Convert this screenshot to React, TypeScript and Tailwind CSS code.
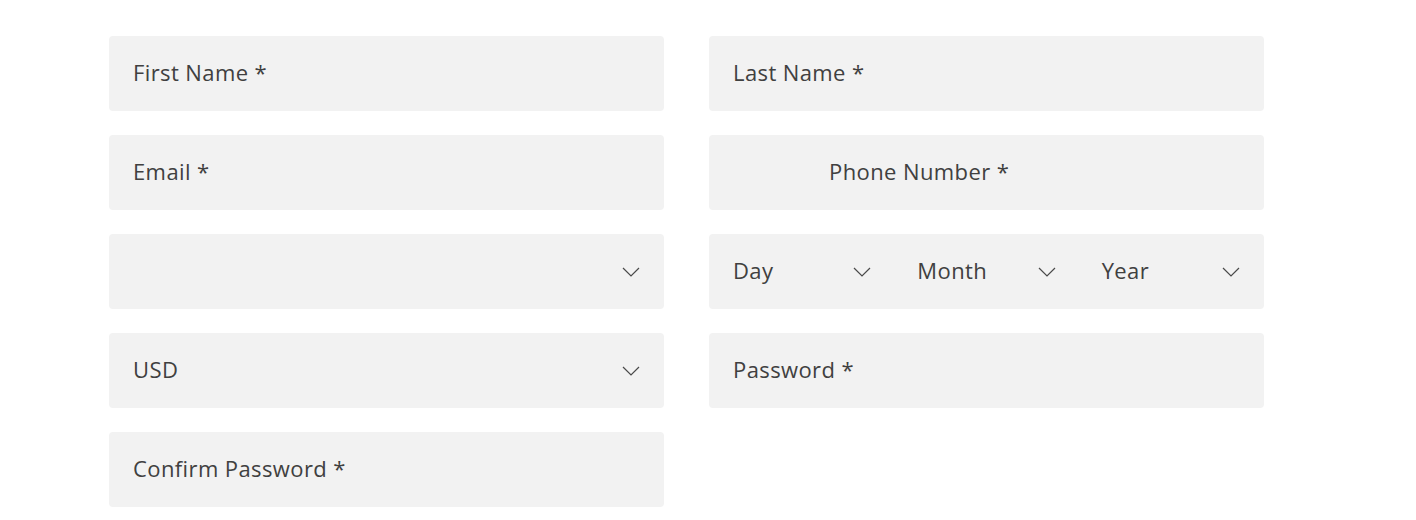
const Chevron = () => (
  <svg width="18" height="10" viewBox="0 0 18 10" fill="none" className="shrink-0 text-[#4a4a4a]">
    <path d="M1 1l8 8 8-8" stroke="currentColor" strokeWidth="1.2" />
  </svg>
);

const Field = ({ label, className = "" }: { label: string; className?: string }) => (
  <div className={`h-[75px] rounded bg-[#f2f2f2] flex items-center px-6 ${className}`}>
    <span className="-mt-0.5">{label}</span>
  </div>
);

const Select = ({ label }: { label: string }) => (
  <div className="h-[75px] rounded bg-[#f2f2f2] flex items-center justify-between px-6">
    <span className="-mt-0.5">{label}</span>
    <Chevron />
  </div>
);

export default function App() {
  return (
    <div className="w-[1416px] h-[520px] bg-white font-['Open_Sans',sans-serif] text-[22px] tracking-[0.4px] text-[#404040]">
      <div className="pl-[109px] pt-[36px] grid grid-cols-[555px_555px] gap-x-[45px] gap-y-[24px]">
        <Field label="First Name *" />
        <Field label="Last Name *" />
        <Field label="Email *" />
        <Field label="Phone Number *" className="pl-[120px]" />
        <Select label="" />
        {/* Date of birth */}
        <div className="h-[75px] rounded bg-[#f2f2f2] px-6 grid grid-cols-3 gap-x-[46px] items-center">
          {["Day", "Month", "Year"].map((item) => (
            <div key={item} className="flex items-center justify-between">
              <span className="-mt-0.5">{item}</span>
              <Chevron />
            </div>
          ))}
        </div>
        <Select label="USD" />
        <Field label="Password *" />
        <Field label="Confirm Password *" />
      </div>
    </div>
  );
}
